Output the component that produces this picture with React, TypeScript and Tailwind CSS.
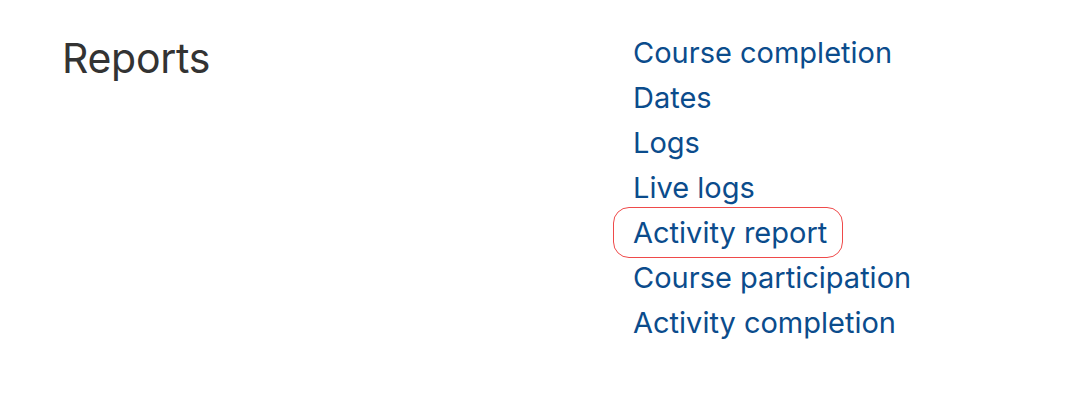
const links = [
  "Course completion",
  "Dates",
  "Logs",
  "Live logs",
  "Activity report",
  "Course participation",
  "Activity completion",
];

export default function App() {
  return (
    <div
      className="w-[1074px] h-[400px] bg-white flex px-[62px] pt-[30px]"
      style={{ fontFamily: 'Inter, "Liberation Sans", Arial, sans-serif' }}
    >
      <div className="w-[571px] shrink-0">
        <h2 className="text-[41px] leading-[50px] mt-[3px] text-[#333333] font-normal tracking-[-0.3px]">
          Reports
        </h2>
      </div>
      <ul className="flex flex-col">
        {links.map((label) => (
          <li key={label} className="relative text-[29px] leading-[45px]">
            {label === "Activity report" && (
              <span className="absolute -left-[20px] -top-[3px] w-[230px] h-[51px] rounded-[16px] border border-[#ef4a4a]" />
            )}
            <a href="#" className="relative text-[#0b4c8c]">
              {label}
            </a>
          </li>
        ))}
      </ul>
    </div>
  );
}
